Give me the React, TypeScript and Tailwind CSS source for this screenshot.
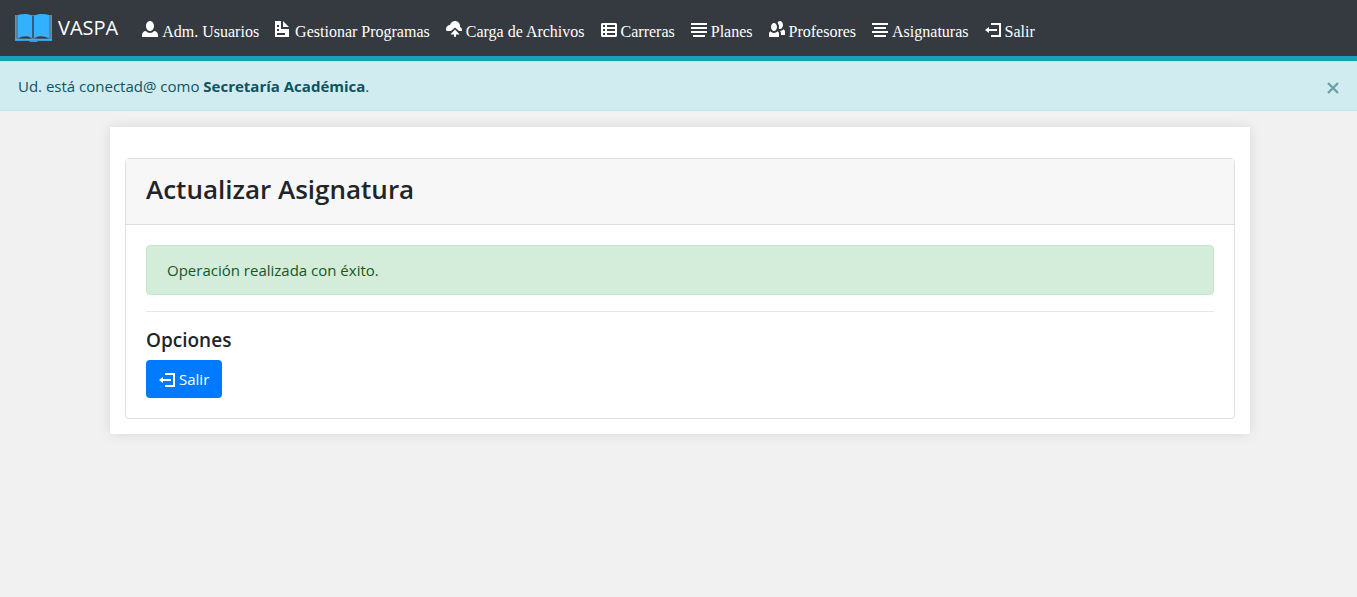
import { useState } from "react";

const ICONS = {
  person:
    "M4 0c-1.1 0-2 1.12-2 2.5s.9 2.5 2 2.5 2-1.12 2-2.5-.9-2.5-2-2.5zm-2.09 5c-1.06.05-1.91.92-1.91 2v1h8v-1c0-1.08-.84-1.95-1.91-2-.54.61-1.28 1-2.09 1-.81 0-1.55-.39-2.09-1z",
  document:
    "M0 0v8h7v-4h-4v-4h-3zm4 0v3h3l-3-3zm-3 2h1v1h-1v-1zm0 2h1v1h-1v-1zm0 2h4v1h-4v-1z",
  cloudUpload:
    "M4.5 0c-1.21 0-2.27.86-2.5 2-1.1 0-2 .9-2 2 0 .37.11.71.28 1h2.22l2-1.700 2 1.700h1.41c.06-.16.09-.33.09-.5 0-.65-.42-1.29-1-1.5v-.5c0-1.38-1.12-2.5-2.5-2.5zM4.5 4.300l-2.300 2.400h1.800v.8c0 .28.22.5.5.5s.5-.22.5-.5v-.8h1.800l-2.300-2.400z",
  spreadsheet:
    "M.75 1c-.41 0-.75.34-.75.75v5.5c0 .41.34.75.75.75h6.5c.41 0 .75-.34.75-.75v-5.5c0-.41-.34-.75-.75-.75h-6.5zm.25 1h1v1h-1v-1zm2 0h4v1h-4v-1zm-2 2h1v1h-1v-1zm2 0h4v1h-4v-1zm-2 2h1v1h-1v-1zm2 0h4v1h-4v-1z",
  justifyCenter:
    "M0 1v1h8v-1h-8zm0 2v1h8v-1h-8zm0 2v1h8v-1h-8zm1 2v1h6v-1h-6z",
  people:
    "M5.5 0c-.51 0-.95.35-1.22.88.45.54.72 1.28.72 2.13 0 .29-.03.55-.09.81.19.11.38.19.59.19.83 0 1.5-.9 1.5-2s-.67-2-1.5-2zm-3 1c-.83 0-1.5.9-1.5 2s.67 2 1.5 2 1.5-.9 1.5-2-.67-2-1.5-2zm4.75 3.16c-.43.51-1.02.82-1.69.84.27.38.44.84.44 1.34v.66h2v-1.66c0-.52-.31-.97-.75-1.19zm-6.5 1c-.44.22-.75.67-.75 1.19v1.66h5v-1.66c0-.52-.31-.97-.75-1.19-.45.53-1.06.84-1.75.84s-1.3-.32-1.75-.84z",
  alignCenter:
    "M0 1v1h8v-1h-8zm1 2v1h6v-1h-6zm-1 2v1h8v-1h-8zm1 2v1h6v-1h-6z",
  logout:
    "M3 1v1h4v5h-4v1h5v-7h-5zm-1 2l-2 1.5 2 1.5v-1h4v-1h-4v-1z",
};

function Icon({ name }: { name: keyof typeof ICONS }) {
  return (
    <svg viewBox="0 0 8 8" className="size-4 shrink-0 fill-current" aria-hidden="true">
      <path d={ICONS[name]} />
    </svg>
  );
}

function BookLogo() {
  return (
    <svg viewBox="0 0 37 28" className="h-7 w-[37px] shrink-0" aria-hidden="true">
      <path d="M0 1h37v26H23l-1 1h-7l-1-1H0z" fill="#339fe6" />
      <path d="M1 1h35v24H1z" fill="#5a809c" />
      <path d="M0 1h1v25H0zM36 1h1v25h-1z" fill="#3d9be0" />
      <path d="M3 1C8-.5 14-.3 17 2v22C13 21 8 21.500 3 24zM19 2c3-2.300 10-2.500 15-1v23c-5-2.500-11-3-15 0z" fill="#33b1ff" />
      <path d="M3 24.500c5-2.500 10-3 14 0zM34 24.500c-5-2.500-10-3-15 0z" fill="#343a40" />
      <path d="M17 2h2v22h-2z" fill="#3a5a75" />
      <path d="M0 25h37v1H0z" fill="#33b1ff" />
    </svg>
  );
}

const NAV: { label: string; icon: keyof typeof ICONS }[] = [
  { label: "Adm. Usuarios", icon: "person" },
  { label: "Gestionar Programas", icon: "document" },
  { label: "Carga de Archivos", icon: "cloudUpload" },
  { label: "Carreras", icon: "spreadsheet" },
  { label: "Planes", icon: "justifyCenter" },
  { label: "Profesores", icon: "people" },
  { label: "Asignaturas", icon: "alignCenter" },
  { label: "Salir", icon: "logout" },
];

export default function App() {
  const [showNotice, setShowNotice] = useState(true);

  return (
    <div className="min-h-screen bg-[#f1f1f1] font-['Open_Sans','Noto_Sans',sans-serif] text-[15px] leading-6 text-[#212529]">
      <header className="flex min-h-[61px] flex-wrap items-center border-b-[5px] border-[#17a2b8] bg-[#343a40] pl-[15px] text-white">
        <a href="#" className="mr-4 flex items-center gap-[6px] text-[20px]">
          <BookLogo />
          VASPA
        </a>
        <nav className="flex flex-wrap pt-2 font-['Liberation_Serif',serif] text-base leading-6">
          {NAV.map(({ label, icon }) => (
            <a key={label} href="#" className="flex gap-1 px-2">
              <span className="pt-px">
                <Icon name={icon} />
              </span>
              {label}
            </a>
          ))}
        </nav>
      </header>

      {showNotice && (
        <div role="status" className="flex items-center justify-between border-y border-[#bee5eb] bg-[#d1ecf1] py-3 pr-4 pl-[18px] text-[#0c5460]">
          <p>
            Ud. está conectad@ como <strong>Secretaría Académica</strong>.
          </p>
          <button
            type="button"
            aria-label="Cerrar"
            onClick={() => setShowNotice(false)}
            className="flex size-4 items-center justify-center pt-1 opacity-50"
          >
            <svg viewBox="0 0 12 12" className="size-3 shrink-0" aria-hidden="true">
              <path d="M1 1l10 10M11 1L1 11" stroke="#0c5460" strokeWidth="2.4" />
            </svg>
          </button>
        </div>
      )}

      <div className="pt-4 pl-[3px]">
        <main className="mx-auto max-w-[1140px] bg-white px-[15px] pt-[31px] pb-[15px] shadow-[0_0_12px_rgba(0,0,0,0.1)]">
          <section className="rounded border border-[#dfdfdf]">
            <div className="border-b border-[#dfdfdf] bg-[#f7f7f7] px-5 pt-[14px] pb-[18px]">
              <h1 className="text-[26px] leading-[33px] font-semibold">Actualizar Asignatura</h1>
            </div>
            <div className="p-5">
              <div role="alert" className="rounded border border-[#c3e6cb] bg-[#d4edda] px-5 py-3 text-[#155724]">
                Operación realizada con éxito.
              </div>
              <hr className="my-4 border-[#e5e5e5]" />
              <h2 className="mb-2 text-[19px] leading-6 font-semibold">Opciones</h2>
              <button type="button" className="flex h-[38px] items-center gap-1 rounded bg-[#007bff] px-[13px] text-white">
                <Icon name="logout" />
                Salir
              </button>
            </div>
          </section>
        </main>
      </div>
    </div>
  );
}
